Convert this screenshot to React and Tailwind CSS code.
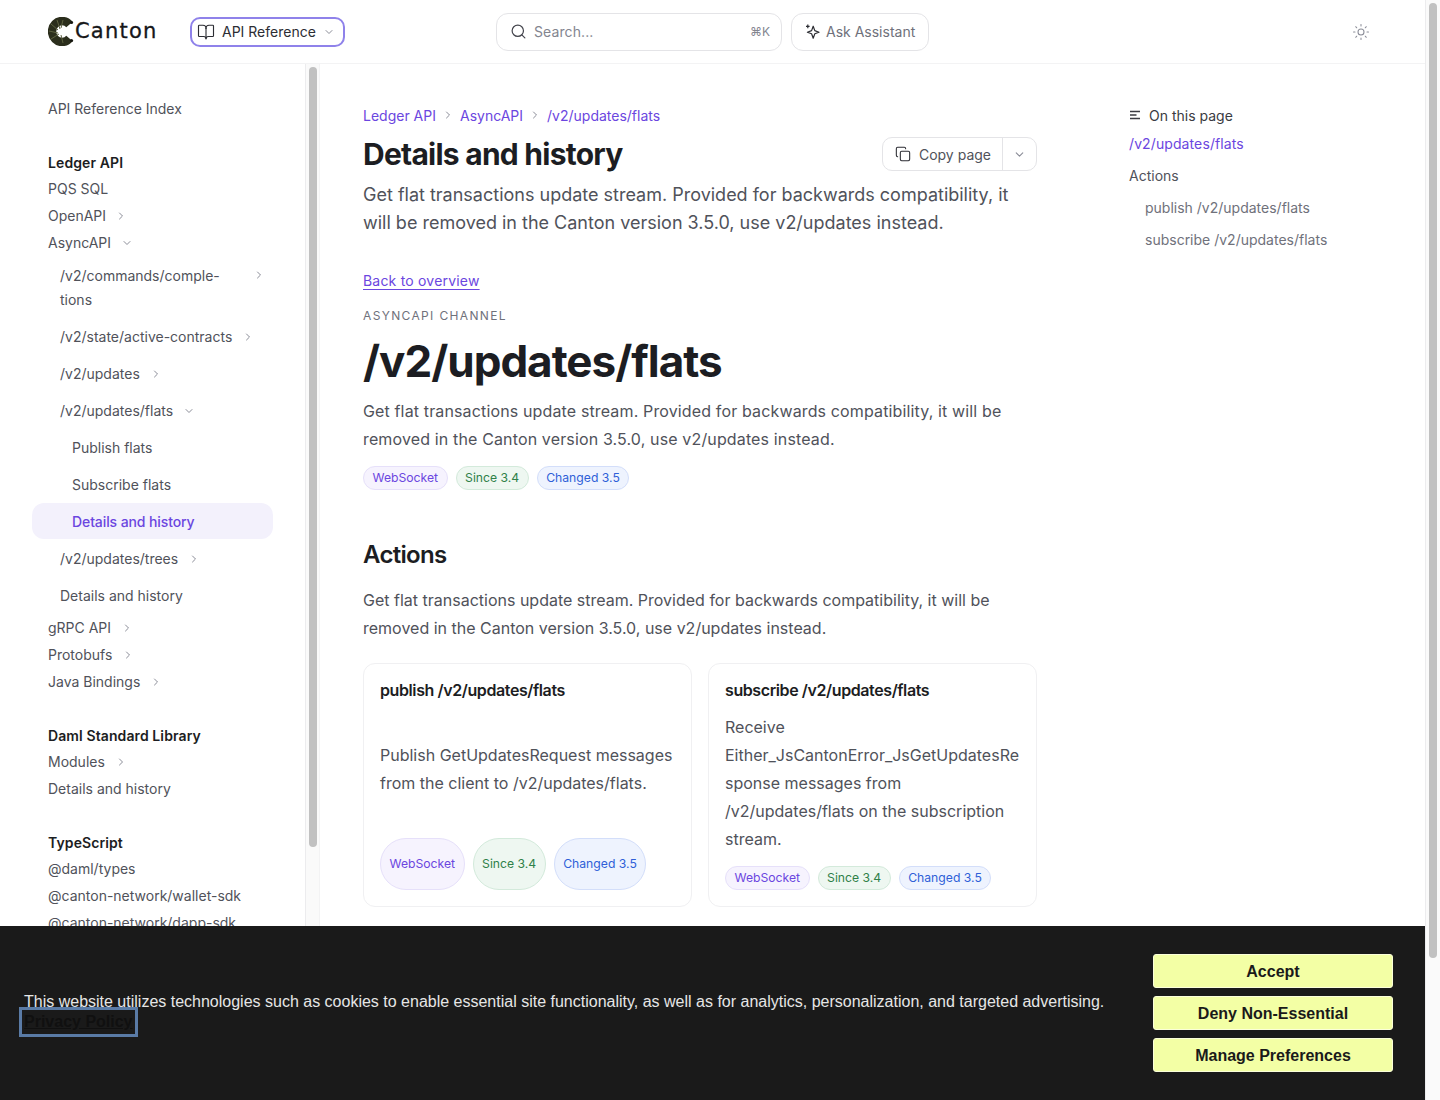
import { BookOpen, ChevronDown, ChevronRight, Copy, Search, Sun } from 'lucide-react'

const FONT = "font-['Inter','Noto_Sans',sans-serif]"

function Chevron({ open, className = '' }) {
  const Icon = open ? ChevronDown : ChevronRight
  return <Icon size={12} strokeWidth={2} className={`shrink-0 text-[#8b8d98] ${className}`} />
}

function Logo() {
  return (
    <div className="flex w-[110px] shrink-0 items-center">
      <svg width="27" height="29" viewBox="0 0 27 29" className="shrink-0">
        <path d="M21.5 7.5A10 10.5 0 1 0 21.5 21.5" fill="none" stroke="#2b2e1c" strokeWidth="8.4" />
        <path d="M3 7 10 13M1 14l9 2M3 22l8-5M9 3l3 9M15 3l-2 8M15 26l-2-8" stroke="#5d6240" strokeWidth="1" />
        <circle cx="23.5" cy="5.5" r="1.6" fill="#15160f" />
        <circle cx="23.5" cy="23.5" r="1.6" fill="#15160f" />
      </svg>
      <span className="font-['DejaVu_Sans',sans-serif] text-[21px] leading-none tracking-[1.2px] text-[#16171a] [-webkit-text-stroke:0.3px_#16171a]">Canton</span>
    </div>
  )
}

function AssistantIcon() {
  return (
    <svg width="15" height="15" viewBox="0 0 15 15" fill="none" stroke="#2c2d33" strokeWidth="1.2" className="shrink-0" strokeLinejoin="round">
      <path d="M8.2 2.2 9.8 6.6 14 8.2 9.8 9.8 8.2 14.2 6.6 9.8 2.4 8.2 6.6 6.6Z" />
      <path d="M2.8.6v3.6M1 2.4h3.6" />
    </svg>
  )
}

function Header() {
  return (
    <header className="flex h-16 shrink-0 items-center border-b border-[#f3f3f4] pl-12">
      <Logo />
      <button className="ml-[32px] flex h-[30px] w-[155px] items-center rounded-[10px] border-2 border-[#8f82ea] pl-[5px] text-[14px] text-[#2c2d33]">
        <BookOpen size={18} strokeWidth={1.5} />
        <span className="ml-[7px]">API Reference</span>
        <ChevronDown size={12} className="ml-[7px] text-[#8b8d98]" />
      </button>
      <div className="ml-[151px] flex h-[38px] w-[286px] items-center rounded-[12px] border border-[#e4e4e7] pl-[13px] pr-[11px] text-[14px] text-[#83858f]">
        <Search size={17} strokeWidth={1.7} className="text-[#44454d]" />
        <span className="ml-[7px] tracking-[0.1px]">Search...</span>
        <span className="ml-auto text-[12px]">⌘K</span>
      </div>
      <div className="ml-[9px] flex h-[38px] w-[138px] items-center rounded-[12px] border border-[#e4e4e7] pl-[13px] text-[14px] text-[#6f717b]">
        <AssistantIcon />
        <span className="ml-[6px]">Ask Assistant</span>
      </div>
      <Sun size={18} strokeWidth={1.4} className="ml-[423px] text-[#8b8d98]" />
    </header>
  )
}

const TOP = 'flex items-center h-[27px] text-[14px] text-[#50525a]'
const NEST = 'flex items-center h-[37px] pl-[60px] text-[14px] text-[#50525a]'
const HEAD = 'h-[26px] flex items-center text-[14px] font-semibold tracking-[0.1px] text-[#1c1d22]'

function Sidebar() {
  return (
    <div className="flex w-[320px] shrink-0 border-r border-[#f3f3f4]">
      <nav className="h-[862px] w-[305px] shrink-0 overflow-hidden pt-[31px]">
        <div className={`${TOP} pl-12`}>API Reference Index</div>
        <div className={`${HEAD} mt-[27px] ml-12`}>Ledger API</div>
        <div className={`${TOP} pl-12 h-[26px]`}>PQS SQL</div>
        <div className={`${TOP} pl-12`}>OpenAPI<Chevron className="ml-[9px]" /></div>
        <div className={`${TOP} pl-12`}>AsyncAPI<Chevron open className="ml-[10px]" /></div>
        <div className="mt-[6px] flex h-[48px] items-start pl-[60px] pr-[40px] pt-[2px] text-[14px] leading-[24px] text-[#50525a]">
          <span>/v2/commands/comple-<br />tions</span>
          <Chevron className="ml-auto mt-[5px]" />
        </div>
        <div className={`${NEST} mt-[8px]`}>/v2/state/active-contracts<Chevron className="ml-[10px]" /></div>
        <div className={NEST}>/v2/updates<Chevron className="ml-[10px]" /></div>
        <div className={NEST}>/v2/updates/flats<Chevron open className="ml-[10px]" /></div>
        <div className={`${NEST} pl-[72px]`}>Publish flats</div>
        <div className={`${NEST} pl-[72px]`}>Subscribe flats</div>
        <div className="ml-[32px] flex h-[36px] w-[241px] items-center rounded-[12px] bg-[#f3f1fc] pl-[40px] text-[14px] font-medium tracking-[-0.1px] text-[#6b46e0]">
          Details and history
        </div>
        <div className={`${NEST} mt-[1px]`}>/v2/updates/trees<Chevron className="ml-[10px]" /></div>
        <div className={NEST}>Details and history</div>
        <div className={`${TOP} pl-12`}>gRPC API<Chevron className="ml-[10px]" /></div>
        <div className={`${TOP} pl-12`}>Protobufs<Chevron className="ml-[10px]" /></div>
        <div className={`${TOP} pl-12`}>Java Bindings<Chevron className="ml-[10px]" /></div>
        <div className={`${HEAD} mt-[27px] ml-12`}>Daml Standard Library</div>
        <div className={`${TOP} pl-12 h-[26px]`}>Modules<Chevron className="ml-[10px]" /></div>
        <div className={`${TOP} pl-12`}>Details and history</div>
        <div className={`${HEAD} mt-[27px] ml-12`}>TypeScript</div>
        <div className={`${TOP} pl-12 h-[26px]`}>@daml/types</div>
        <div className={`${TOP} pl-12`}>@canton-network/wallet-sdk</div>
        <div className={`${TOP} pl-12`}>@canton-network/dapp-sdk</div>
      </nav>
      <div className="h-[862px] w-[14px] shrink-0 border-l border-[#ececee] bg-[#fafafa] pl-[3px] pt-[3px]">
        <div className="h-[780px] w-[8px] rounded-full bg-[#c1c1c1]" />
      </div>
    </div>
  )
}

function Badge({ tone, children }) {
  const tones = {
    purple: 'border-[#e6e0fa] bg-[#f6f3fe] text-[#6b46e0]',
    green: 'border-[#d3eadb] bg-[#eef7f1] text-[#2f8149]',
    blue: 'border-[#d3defa] bg-[#eef3fe] text-[#2f5fd8]',
  }
  return (
    <span className={`flex items-center rounded-full border px-[8.5px] text-[12.2px] ${tones[tone]}`}>
      {children}
    </span>
  )
}

function Badges({ className = '' }) {
  return (
    <div className={`flex gap-[8px] ${className}`}>
      <Badge tone="purple">WebSocket</Badge>
      <Badge tone="green">Since 3.4</Badge>
      <Badge tone="blue">Changed 3.5</Badge>
    </div>
  )
}

function ActionCard({ title, children }) {
  return (
    <div className="grid gap-[13px] rounded-[12px] border border-[#f0f0f2] p-4">
      <div className="text-[16px] leading-[20px] font-semibold tracking-[-0.4px] text-[#1c1d22]">{title}</div>
      <p className="text-[16px] leading-[28px] [overflow-wrap:anywhere] text-[#50525a]">{children}</p>
      <Badges className="min-h-[24px]" />
    </div>
  )
}

function Article() {
  return (
    <main className="w-[674px] shrink-0 pt-[41px]">
      <div className="flex h-5 items-center text-[14px] text-[#6b46e0]">
        Ledger API
        <ChevronRight size={12} className="mx-[6px] text-[#8b8d98]" />
        AsyncAPI
        <ChevronRight size={12} className="mx-[6px] text-[#8b8d98]" />
        /v2/updates/flats
      </div>
      <div className="mt-[11px] flex h-[36px] items-center justify-between">
        <h1 className="text-[30px] leading-[36px] font-bold tracking-[-0.75px] text-[#1c1d22]">Details and history</h1>
        <div className="flex h-[34px] items-center rounded-[10px] border border-[#e4e4e7] text-[14px] text-[#50525a]">
          <div className="flex h-full items-center border-r border-[#e4e4e7] pl-[12px] pr-[11px]">
            <Copy size={16} strokeWidth={1.6} className="text-[#2c2d33]" />
            <span className="ml-[8px]">Copy page</span>
          </div>
          <div className="flex h-full w-[33px] items-center justify-center">
            <ChevronDown size={13} className="text-[#8b8d98]" />
          </div>
        </div>
      </div>
      <p className="mt-[9px] text-[18px] leading-[28px] text-[#50525a]">
        Get flat transactions update stream. Provided for backwards compatibility, it will be removed in the Canton version 3.5.0, use v2/updates instead.
      </p>
      <a className="mt-[34px] block text-[14px] leading-[20px] tracking-[0.2px] text-[#6b46e0] underline underline-offset-[3px]">Back to overview</a>
      <div className="mt-[15px] text-[12px] leading-[20px] tracking-[1.35px] text-[#6f717b]">ASYNCAPI CHANNEL</div>
      <h1 className="mt-[11px] text-[44px] leading-[48px] font-bold tracking-[-1px] text-[#1c1d22]">/v2/updates/flats</h1>
      <p className="mt-[12px] text-[16px] leading-[28px] tracking-[0.14px] text-[#50525a]">
        Get flat transactions update stream. Provided for backwards compatibility, it will be removed in the Canton version 3.5.0, use v2/updates instead.
      </p>
      <Badges className="mt-[13px] h-[24px]" />
      <h2 className="mt-[49px] text-[24px] leading-[32px] font-semibold tracking-[-0.7px] text-[#1c1d22]">Actions</h2>
      <p className="mt-[15px] text-[16px] leading-[28px] text-[#50525a]">
        Get flat transactions update stream. Provided for backwards compatibility, it will be removed in the Canton version 3.5.0, use v2/updates instead.
      </p>
      <div className="mt-[21px] grid grid-cols-2 gap-4">
        <ActionCard title="publish /v2/updates/flats">Publish GetUpdatesRequest messages from the client to /v2/updates/flats.</ActionCard>
        <ActionCard title="subscribe /v2/updates/flats">Receive Either_JsCantonError_JsGetUpdatesResponse messages from /v2/updates/flats on the subscription stream.</ActionCard>
      </div>
    </main>
  )
}

function Toc() {
  return (
    <aside className="ml-[92px] pt-[41px] text-[14px]">
      <div className="flex h-5 items-center text-[#3a3b42]">
        <svg width="12" height="10" viewBox="0 0 12 10" className="mr-[8px]" stroke="currentColor" strokeWidth="1.4">
          <path d="M1 1.5h10M1 5h6.5M1 8.5h10" />
        </svg>
        On this page
      </div>
      <div className="mt-[9px] leading-[20px] tracking-[0.1px] text-[#6b46e0]">/v2/updates/flats</div>
      <div className="mt-[12px] leading-[20px] text-[#50525a]">Actions</div>
      <div className="mt-[12px] pl-4 leading-[20px] text-[#6f717b]">publish /v2/updates/flats</div>
      <div className="mt-[12px] pl-4 leading-[20px] text-[#6f717b]">subscribe /v2/updates/flats</div>
    </aside>
  )
}

function CookieBanner() {
  const btn = 'h-[34px] w-[240px] rounded-[3px] border border-[#fbffd9] bg-[#f3ffa5] pt-[2px] text-[16px] font-bold text-[#1a1a1a]'
  return (
    <div className="absolute bottom-0 left-0 flex h-[174px] w-[1425px] items-center justify-between bg-[#1a1a1a] pl-[24px] pr-[32px] font-['Liberation_Sans',Arial,sans-serif]">
      <div className="mb-[2px] text-[16px] leading-[20px] text-[#e6e6e6]">
        <p>This website utilizes technologies such as cookies to enable essential site functionality, as well as for analytics, personalization, and targeted advertising.</p>
        <a className="inline-block font-bold text-[#101010] underline outline-[3px] outline-offset-[2px] outline-[#5a7ba6]">Privacy Policy</a>
      </div>
      <div className="flex flex-col gap-[8px]">
        <button className={btn}>Accept</button>
        <button className={btn}>Deny Non-Essential</button>
        <button className={btn}>Manage Preferences</button>
      </div>
    </div>
  )
}

export default function App() {
  return (
    <div className={`relative flex h-[1100px] w-[1440px] overflow-hidden bg-white ${FONT}`}>
      <div className="flex w-[1425px] shrink-0 flex-col">
        <Header />
        <div className="flex min-h-0 flex-1">
          <Sidebar />
          <div className="flex pl-[43px]">
            <Article />
            <Toc />
          </div>
        </div>
      </div>
      <div className="h-full w-[15px] shrink-0 border-l border-[#ececee] bg-[#fafafa] pl-[3px] pt-[3px]">
        <div className="h-[955px] w-[8px] rounded-full bg-[#c1c1c1]" />
      </div>
      <CookieBanner />
    </div>
  )
}
